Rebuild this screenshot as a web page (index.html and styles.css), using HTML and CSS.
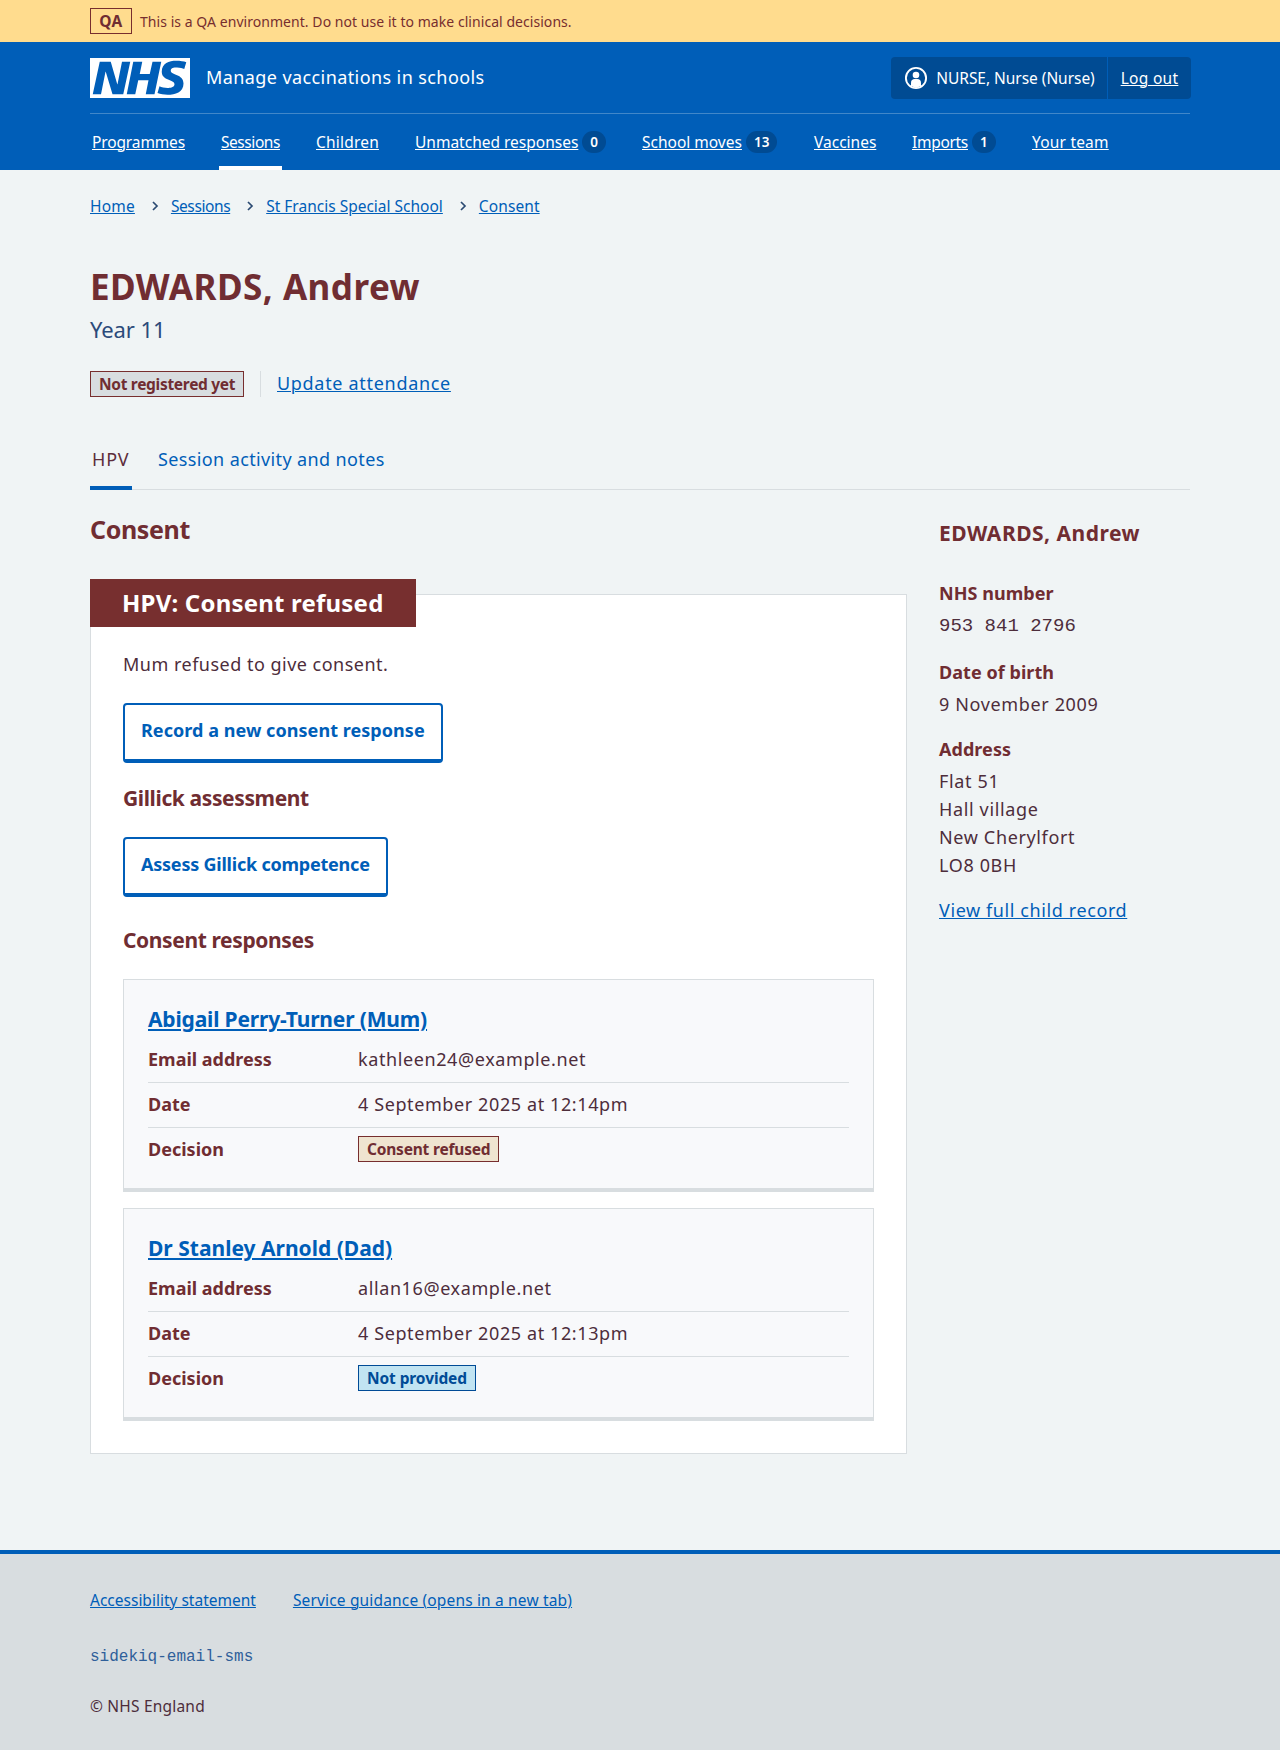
FILE: index.html
```html
<!DOCTYPE html>
<html lang="en">
<head>
<meta charset="utf-8">
<title>EDWARDS, Andrew – Manage vaccinations in schools</title>
<link rel="stylesheet" href="styles.css">
</head>
<body>
<div class="environment">
  <div class="container environment-inner">
    <strong class="tag tag-environment">QA</strong>
    <span class="environment-text">This is a QA environment. Do not use it to make clinical decisions.</span>
  </div>
</div>
<header class="header">
  <div class="container">
    <div class="header-top">
      <svg class="logo" viewBox="0 0 40 16" width="100" height="40" role="img" aria-label="NHS">
        <path fill="#fff" d="M0 0h40v16H0z"/>
        <path fill="#005eb8" d="M3.9 1.5h4.4l2.6 9h.1l1.8-9h3.3l-2.8 13H9l-2.7-9h-.1l-1.8 9H1.1M17.3 1.5h3.6l-1 4.9h4L25 1.5h3.5l-2.7 13h-3.5l1.1-5.6h-4.1l-1.2 5.6h-3.4M37.7 4.4c-.7-.3-1.6-.6-2.9-.6-1.4 0-2.5.2-2.5 1.3 0 1.8 5.1 1.2 5.1 5.1 0 3.6-3.3 4.5-6.4 4.5-1.3 0-2.9-.3-4-.7l.8-2.7c.7.4 2.1.7 3.2.7s2.8-.2 2.8-1.5c0-2.1-5.1-1.3-5.1-5 0-3.4 2.9-4.4 5.8-4.4 1.6 0 3.1.2 4 .6"/>
      </svg>
      <span class="service-name">Manage vaccinations in schools</span>
      <div class="account">
        <div class="account-item account-user">
          <svg width="24" height="24" viewBox="0 0 24 24" aria-hidden="true"><circle cx="12" cy="12" r="10.100" fill="none" stroke="#fff" stroke-width="1.900"/><circle cx="12" cy="9" r="3.300" fill="#fff"/><path fill="#fff" d="M7 20v-3.300c0-2.200 1.600-3.600 3.600-3.600h2.800c2 0 3.600 1.400 3.600 3.600V20l-5 2z"/></svg>
          <span>NURSE, Nurse (Nurse)</span>
        </div>
        <div class="account-item account-logout"><a href="#">Log out</a></div>
      </div>
    </div>
    <nav class="nav">
      <div class="nav-item nav-programmes"><a href="#">Programmes</a></div>
      <div class="nav-item nav-sessions nav-current"><a href="#">Sessions</a></div>
      <div class="nav-item nav-children"><a href="#">Children</a></div>
      <div class="nav-item nav-unmatched"><a href="#">Unmatched responses</a><span class="count">0</span></div>
      <div class="nav-item nav-moves"><a href="#">School moves</a><span class="count">13</span></div>
      <div class="nav-item nav-vaccines"><a href="#">Vaccines</a></div>
      <div class="nav-item nav-imports"><a href="#">Imports</a><span class="count">1</span></div>
      <div class="nav-item nav-team"><a href="#">Your team</a></div>
    </nav>
  </div>
</header>
<div class="container page">
  <nav class="breadcrumb">
    <a class="crumb-home" href="#">Home</a><svg class="chevron" width="8" height="10" viewBox="0 0 8 10"><path d="M2 1l4 4-4 4" fill="none" stroke="#2b4a72" stroke-width="1.700"/></svg>
    <a class="crumb-sessions" href="#">Sessions</a><svg class="chevron" width="8" height="10" viewBox="0 0 8 10"><path d="M2 1l4 4-4 4" fill="none" stroke="#2b4a72" stroke-width="1.700"/></svg>
    <a href="#">St Francis Special School</a><svg class="chevron" width="8" height="10" viewBox="0 0 8 10"><path d="M2 1l4 4-4 4" fill="none" stroke="#2b4a72" stroke-width="1.700"/></svg>
    <a class="crumb-consent" href="#">Consent</a>
  </nav>
  <h1 class="title">EDWARDS, Andrew</h1>
  <p class="caption">Year 11</p>
  <div class="status">
    <strong class="tag tag-grey">Not registered yet</strong>
    <span class="status-action"><a href="#">Update attendance</a></span>
  </div>
  <nav class="tabs">
    <a class="tab tab-current" href="#">HPV</a>
    <a class="tab" href="#">Session activity and notes</a>
  </nav>
  <div class="columns">
    <main class="main">
      <h2 class="heading">Consent</h2>
      <section class="card">
        <h3 class="card-label">HPV: Consent refused</h3>
        <p class="card-text">Mum refused to give consent.</p>
        <a class="button" href="#">Record a new consent response</a>
        <h4 class="subheading subheading-gillick">Gillick assessment</h4>
        <a class="button button-gillick" href="#">Assess Gillick competence</a>
        <h4 class="subheading subheading-responses">Consent responses</h4>
        <article class="response">
          <h5 class="response-title"><a class="name-long" href="#">Abigail Perry-Turner (Mum)</a></h5>
          <dl class="summary">
            <div class="row"><dt>Email address</dt><dd>kathleen24@example.net</dd></div>
            <div class="row"><dt>Date</dt><dd>4 September 2025 at 12:14pm</dd></div>
            <div class="row"><dt>Decision</dt><dd class="decision"><strong class="tag tag-sand">Consent refused</strong></dd></div>
          </dl>
        </article>
        <article class="response">
          <h5 class="response-title"><a href="#">Dr Stanley Arnold (Dad)</a></h5>
          <dl class="summary">
            <div class="row"><dt>Email address</dt><dd>allan16@example.net</dd></div>
            <div class="row"><dt>Date</dt><dd>4 September 2025 at 12:13pm</dd></div>
            <div class="row"><dt>Decision</dt><dd class="decision"><strong class="tag tag-blue">Not provided</strong></dd></div>
          </dl>
        </article>
      </section>
    </main>
    <aside class="side">
      <h3 class="side-title">EDWARDS, Andrew</h3>
      <dl class="details">
        <div class="detail detail-nhs"><dt>NHS number</dt><dd class="mono">953&nbsp;841&nbsp;2796</dd></div>
        <div class="detail"><dt>Date of birth</dt><dd>9 November 2009</dd></div>
        <div class="detail"><dt>Address</dt><dd>Flat 51<br>Hall village<br>New Cherylfort<br>LO8 0BH</dd></div>
      </dl>
      <a class="record-link" href="#">View full child record</a>
    </aside>
  </div>
</div>
<footer class="footer">
  <div class="container">
    <div class="footer-links"><a href="#">Accessibility statement</a><a class="guidance" href="#">Service guidance (opens in a new tab)</a></div>
    <p class="footer-queue">sidekiq-email-sms</p>
    <p class="footer-copyright">© NHS England</p>
  </div>
</footer>
</body>
</html>
```
FILE: styles.css
```css
* { box-sizing: border-box; }
body {
  margin: 0;
  background: #f0f4f5;
  color: #4d2d3b;
  font: 18px/28px "Noto Sans", "Open Sans", sans-serif;
}
h1, h2, h3, h4, h5, p, dl, dd { margin: 0; }
a { color: #005eb8; text-underline-offset: 1px; text-decoration-thickness: 1px; }
h1, h2, h3, h4, h5, dt { color: #702d32; font-weight: 700; }
.container { width: 1100px; margin: 0 auto; }

.tag {
  display: inline-block;
  height: 26px;
  padding: 0 8px;
  border: 1px solid #772e2e;
  color: #702d32;
  font-size: 15.5px;
  font-weight: 700;
  letter-spacing: -0.3px;
  line-height: 24px;
  white-space: nowrap;
  vertical-align: middle;
}
.tag-environment { width: 42px; text-align: center; padding: 0; letter-spacing: 0.4px; }
.tag-grey { width: 154px; background: #d8dde0; }
.tag-sand { width: 141px; background: #efe4d0; letter-spacing: -0.2px; }
.tag-blue { width: 118px; background: #c1e4f2; border-color: #004b96; color: #004b96; letter-spacing: -0.1px; }

.environment { height: 42px; background: #ffdc8e; color: #772e2e; }
.environment-inner { display: flex; align-items: center; gap: 8px; height: 42px; }
.environment-text { padding-top: 1px; font-size: 14px; line-height: 22px; letter-spacing: 0.05px; }

.header { height: 128px; background: #005eb8; color: #fff; }
.header a { color: #fff; }
.header-top { display: flex; align-items: center; height: 72px; border-bottom: 1px solid #4187c9; }
.service-name { margin-left: 16px; padding-bottom: 2px; letter-spacing: 0.41px; }
.account { display: flex; height: 42px; margin: 0 -1px 0 auto; background: #004b93; border-radius: 4px; font-size: 15.5px; }
.account-item { display: flex; align-items: center; justify-content: center; width: 83px; }
.account-user { gap: 8px; width: 217px; padding-left: 1px; border-right: 1px solid #005eb8; letter-spacing: -0.04px; }
.account-logout { letter-spacing: 0.3px; }
.nav { display: flex; height: 56px; font-size: 15.5px; padding-left: 2px; }
.nav-item { display: flex; align-items: center; height: 56px; white-space: nowrap; }
.nav-programmes { width: 129px; letter-spacing: -0.13px; }
.nav-children { width: 99px; letter-spacing: 0.2px; }
.nav-unmatched { width: 227px; }
.nav-moves { width: 172px; }
.nav-vaccines { width: 98px; }
.nav-imports { width: 120px; letter-spacing: -0.3px; }
.nav-team { letter-spacing: 0.2px; }
.nav-current { width: 63px; margin: 0 34px 0 -2px; padding: 4px 0 0 2px; border-bottom: 4px solid #fff; letter-spacing: -0.44px; }
.count { margin-left: 4px; padding: 0 8px; height: 22px; border-radius: 11px; background: #004b93; font-size: 13.5px; line-height: 22px; font-weight: 600; letter-spacing: 0; }

.page { height: 1380px; padding-top: 22px; }
.breadcrumb { display: flex; align-items: center; height: 28px; font-size: 15.5px; }
.crumb-home { letter-spacing: 0.2px; }
.crumb-sessions { letter-spacing: -0.4px; }
.crumb-consent { letter-spacing: 0.1px; }
.chevron { margin: 0 12px 0 16px; }
.title { margin-top: 43px; font-size: 35px; line-height: 48px; letter-spacing: 0.49px; }
.caption { margin-top: 2px; font-size: 22px; line-height: 32px; color: #2b4a7a; letter-spacing: -0.1px; }
.status { display: flex; align-items: center; height: 26px; margin-top: 26px; }
.status-action { height: 26px; margin-left: 16px; padding-left: 16px; border-left: 1px solid #d8dde0; line-height: 24px; letter-spacing: 0.69px; }
.tabs { display: flex; height: 50px; margin-top: 43px; border-bottom: 1px solid #d8dde0; }
.tab { height: 50px; padding: 5px 3px 0; margin-right: 23px; color: #005eb8; text-decoration: none; letter-spacing: 0.38px; }
.tab-current { width: 42px; padding-left: 2px; color: #5d2d3b; border-bottom: 4px solid #005eb8; letter-spacing: 0.8px; }

.columns { display: flex; gap: 32px; }
.main { width: 817px; }
.heading { margin-top: 23px; font-size: 25px; line-height: 32px; letter-spacing: -0.36px; }
.card { height: 860px; margin-top: 49px; padding: 0 32px; border: 1px solid #d8dde0; background: #fff; }
.card-label { width: 326px; height: 48px; margin: -16px 0 0 -33px; padding-left: 32px; background: #772f2f; color: #fff; font-size: 24px; line-height: 48px; letter-spacing: 0.2px; }
.card-text { margin: 23px 0 25px; letter-spacing: 0.49px; }
.button { display: block; width: 320px; height: 60px; padding: 11px 16px 0; border: 2px solid #005eb8; border-bottom-width: 4px; border-radius: 4px; font-weight: 700; letter-spacing: 0.05px; text-decoration: none; white-space: nowrap; }
.button-gillick { width: 265px; letter-spacing: -0.22px; }
.subheading { font-size: 21px; line-height: 32px; letter-spacing: -0.38px; }
.subheading-gillick { margin: 19px 0 23px; }
.subheading-responses { margin: 27px 0 23px; }
.response { height: 213px; margin-bottom: 16px; padding: 23px 24px 0; border: 1px solid #d8dde0; border-bottom-width: 4px; background: #f8f9fb; }
.response-title { font-size: 21px; line-height: 32px; }
.response-title a { text-decoration-thickness: 2px; text-underline-offset: 2px; }
.name-long { letter-spacing: -0.17px; }
.summary { padding-top: 3px; }
.row { display: flex; align-items: center; height: 45px; padding-bottom: 2px; border-bottom: 1px solid #d8dde0; }
.row:last-child { height: 44px; border: 0; }
.row dt { width: 210px; }
.row dd { letter-spacing: 0.6px; }
.row .decision { display: flex; padding-bottom: 1px; }

.side { width: 251px; }
.side-title { margin-top: 27px; font-size: 21px; line-height: 32px; letter-spacing: 0.49px; }
.details { margin-top: 30px; }
.detail { margin-bottom: 17px; letter-spacing: 0.64px; }
.detail dt { letter-spacing: 0.05px; }
.detail-nhs { margin-bottom: 18px; }
.detail dd { padding-top: 4px; }
.detail .mono { padding-top: 6px; font-family: "Liberation Mono", monospace; font-size: 19px; line-height: 27px; letter-spacing: 0; }
.record-link { display: block; letter-spacing: 0.6px; }

.footer { height: 200px; border-top: 4px solid #005eb8; background: #d8dde0; font-size: 15.5px; }
.footer-links { display: flex; gap: 37px; padding-top: 32px; }
.guidance { letter-spacing: 0.16px; }
.footer-queue { margin-top: 29px; font-family: "Liberation Mono", monospace; font-size: 16px; color: #2f5f9a; }
.footer-copyright { margin-top: 21px; letter-spacing: 0.2px; }
```
